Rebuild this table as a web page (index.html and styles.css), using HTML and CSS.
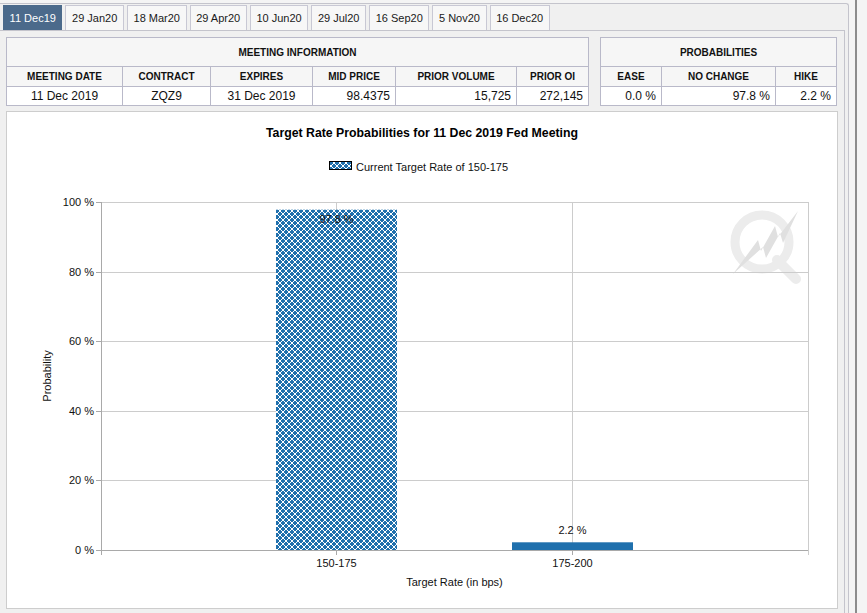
FILE: index.html
```html
<!DOCTYPE html>
<html>
<head>
<meta charset="utf-8">
<link rel="stylesheet" href="styles.css">
</head>
<body>
<div class="page">
  <div class="panel">
    <div class="tabs">
      <div class="tab active">11 Dec19</div>
      <div class="tab">29 Jan20</div>
      <div class="tab">18 Mar20</div>
      <div class="tab">29 Apr20</div>
      <div class="tab">10 Jun20</div>
      <div class="tab">29 Jul20</div>
      <div class="tab">16 Sep20</div>
      <div class="tab">5 Nov20</div>
      <div class="tab">16 Dec20</div>
    </div>
    <div class="content">
      <div class="tables">
        <table class="info">
          <colgroup>
            <col class="c-date"><col class="c-contract"><col class="c-expires"><col class="c-mid"><col class="c-vol"><col class="c-oi">
          </colgroup>
          <tr class="r-title"><th colspan="6">MEETING INFORMATION</th></tr>
          <tr class="r-head"><th>MEETING DATE</th><th>CONTRACT</th><th>EXPIRES</th><th>MID PRICE</th><th>PRIOR VOLUME</th><th>PRIOR OI</th></tr>
          <tr class="r-data"><td class="ctr">11 Dec 2019</td><td class="ctr">ZQZ9</td><td class="ctr">31 Dec 2019</td><td class="num">98.4375</td><td class="num">15,725</td><td class="num">272,145</td></tr>
        </table>
        <table class="probs">
          <colgroup>
            <col class="c-ease"><col class="c-nochange"><col class="c-hike">
          </colgroup>
          <tr class="r-title"><th colspan="3">PROBABILITIES</th></tr>
          <tr class="r-head"><th>EASE</th><th>NO CHANGE</th><th>HIKE</th></tr>
          <tr class="r-data"><td class="num">0.0 %</td><td class="num">97.8 %</td><td class="num">2.2 %</td></tr>
        </table>
      </div>
      <div class="chart">
        <svg class="plot" width="830" height="496" viewBox="0 0 830 496">
          <defs>
            <pattern id="hatch" width="6" height="6" patternUnits="userSpaceOnUse">
              <rect width="6" height="6" fill="#1f70ad"/>
              <path d="M0 0L6 6M6 0L0 6" stroke="#ffffff" stroke-width="1"/>
            </pattern>
          </defs>
          <text class="title" x="415" y="25" text-anchor="middle">Target Rate Probabilities for 11 Dec 2019 Fed Meeting</text>
          <rect x="322.5" y="49.5" width="22" height="8" fill="url(#hatch)" stroke="#000" stroke-width="1"/>
          <text class="lbl" x="349" y="59">Current Target Rate of 150-175</text>

          <g class="logo">
            <circle cx="755" cy="130" r="27" fill="none" stroke="#ececec" stroke-width="9"/>
            <path d="M770 148 L789 167" stroke="#ececec" stroke-width="10" stroke-linecap="round"/>
            <polygon points="726,162 751,128 754,139 768,114 771,125 791,99 776,131 773,121 759,146 756,135" fill="#e0e0e0"/>
          </g>

          <g class="grid">
            <path d="M94 90.5H801M94 160.5H801M94 229.5H801M94 299.5H801M94 368.5H801"/>
            <path d="M329.5 90V438M565.5 90V438M801.5 90V443"/>
          </g>

          <rect x="269" y="97.7" width="121" height="340.3" fill="url(#hatch)"/>
          <rect x="505" y="430.3" width="121" height="7.7" fill="#1f70ad"/>

          <g class="axis">
            <path d="M94.5 90V443M94 438.5H801"/>
            <path d="M89 90.5H94M89 160.5H94M89 229.5H94M89 299.5H94M89 368.5H94M89 438.5H94"/>
            <path d="M329.5 438V443M565.5 438V443"/>
          </g>

          <text class="lbl" x="87" y="94" text-anchor="end">100 %</text>
          <text class="lbl" x="87" y="164" text-anchor="end">80 %</text>
          <text class="lbl" x="87" y="233" text-anchor="end">60 %</text>
          <text class="lbl" x="87" y="303" text-anchor="end">40 %</text>
          <text class="lbl" x="87" y="372" text-anchor="end">20 %</text>
          <text class="lbl" x="87" y="442" text-anchor="end">0 %</text>

          <text class="lbl" x="329.5" y="110.5" text-anchor="middle">97.8 %</text>
          <text class="lbl" x="565.5" y="422" text-anchor="middle">2.2 %</text>

          <text class="lbl" x="329.5" y="455" text-anchor="middle">150-175</text>
          <text class="lbl" x="565.5" y="455" text-anchor="middle">175-200</text>
          <text class="lbl" x="447.5" y="474" text-anchor="middle">Target Rate (in bps)</text>
          <text class="lbl" x="0" y="0" text-anchor="middle" transform="translate(44 264) rotate(-90)">Probability</text>
        </svg>
      </div>
    </div>
  </div>
  <div class="edge"></div>
</div>
</body>
</html>
```

FILE: styles.css
```css
* { box-sizing: border-box; }

body {
  margin: 0;
  width: 867px;
  height: 613px;
  overflow: hidden;
  background: #f4f4f4;
  font-family: "Liberation Sans", Arial, sans-serif;
  color: #111;
}

.page {
  display: flex;
  height: 613px;
}

.panel {
  width: 849px;
  margin-top: 3px;
  border-top: 1px solid #c4c4cc;
  border-right: 1px solid #c4c4cc;
  border-top-right-radius: 3px;
  background: #f0f0f0;
  display: flex;
  flex-direction: column;
}

.edge {
  width: 2px;
  margin-left: 6px;
  background: #8c8c8c;
}

.tabs {
  display: flex;
  gap: 3px;
  height: 26px;
  padding: 1px 0 0 3px;
}

.tab {
  height: 25px;
  padding: 0 5.6px;
  border: 1px solid #c8c8d4;
  border-bottom: none;
  background: #f7f7f7;
  font-size: 11px;
  line-height: 24px;
  color: #1a1a1a;
  white-space: nowrap;
}

.tab.active {
  background: #4b6a8b;
  border-color: #4b6a8b;
  color: #fff;
}

.content {
  flex: 1;
  margin-right: 3px;
  border-top: 1px solid #c4c4cc;
  border-right: 1px solid #c4c4cc;
  padding: 6px 7px 0 6px;
}

.tables {
  display: flex;
  justify-content: space-between;
}

table {
  border-collapse: collapse;
  table-layout: fixed;
  background: #fff;
}

th, td {
  border: 1px solid #b9b9c9;
  padding: 0 5px;
  white-space: nowrap;
}

th {
  font-size: 10px;
  font-weight: bold;
  text-align: center;
  background: #f6f6f6;
  color: #111;
}

td {
  font-size: 12px;
  color: #111;
}

td.ctr { text-align: center; }
td.num { text-align: right; }

.r-title th { height: 29px; }
.r-head th { height: 20px; }
.r-data td { height: 19px; }

.info { width: 583px; }
.c-date { width: 116px; }
.c-contract { width: 88px; }
.c-expires { width: 102px; }
.c-mid { width: 83px; }
.c-vol { width: 121px; }
.c-oi { width: 72px; }

.probs { width: 237px; }
.c-ease { width: 61px; }
.c-nochange { width: 114px; }
.c-hike { width: 61px; }

.chart {
  margin-top: 5px;
  margin-right: -1px;
  height: 498px;
  border: 1px solid #cdcdcd;
  background: #fff;
}

.plot {
  display: block;
  font-family: "Liberation Sans", Arial, sans-serif;
}

.plot .title {
  font-size: 12.3px;
  font-weight: bold;
  fill: #000;
}

.plot .lbl {
  font-size: 11px;
  fill: #111;
}

.grid path {
  fill: none;
  stroke: #cccccc;
  stroke-width: 1;
}

.axis path {
  fill: none;
  stroke: #a9a9a9;
  stroke-width: 1;
}
```
